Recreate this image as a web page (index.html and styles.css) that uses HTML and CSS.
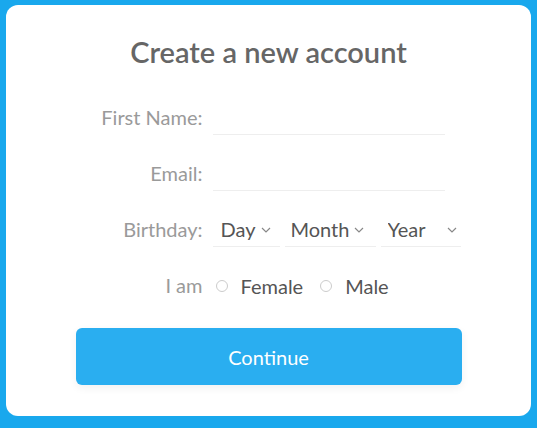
FILE: index.html
```html
<!DOCTYPE html>
<html lang="en">

<head>
    <meta charset="UTF-8">
    <meta name="viewport" content="width=device-width, initial-scale=1">
    <title>Create a new account</title>
    <link rel="stylesheet" href="styles.css">
</head>

<body>

    <div class="card">
        <h1>Create a new account</h1>

        <form class="signup">
            <label class="label" for="firstName">First Name:</label>
            <input class="field" type="text" id="firstName">

            <label class="label" for="email">Email:</label>
            <input class="field" type="email" id="email">

            <span class="label">Birthday:</span>
            <div class="birthday">
                <select class="pick pick-day">
                    <option>Day</option>
                </select>
                <select class="pick pick-month">
                    <option>Month</option>
                </select>
                <select class="pick pick-year">
                    <option>Year</option>
                </select>
            </div>

            <span class="label">I am</span>
            <div class="gender">
                <label class="radio"><input type="radio" name="gender"><span>Female</span></label>
                <label class="radio"><input type="radio" name="gender"><span>Male</span></label>
            </div>

            <button type="button" class="continue">Continue</button>
        </form>
    </div>

</body>

</html>
```

FILE: styles.css
```css
body {
    margin: 0;
    padding: 5px 6px 12px;
    background: #19a8ed;
    font-family: 'Lato', sans-serif;
}

.card {
    background: white;
    border-radius: 12px;
    height: 411px;
    box-sizing: border-box;
    padding-top: 28px;
}

h1 {
    margin: 0;
    text-align: center;
    font-size: 29px;
    font-weight: 600;
    color: #666;
    line-height: 38px;
}

.signup {
    width: 386px;
    margin: 29px auto 0;
    display: grid;
    grid-template-columns: 127px 1fr;
    column-gap: 10px;
    row-gap: 21px;
    align-items: center;
}

.label {
    text-align: right;
    font-size: 20px;
    color: #9a9a9a;
    line-height: 35px;
}

.field {
    width: 232px;
    height: 35px;
    box-sizing: border-box;
    border: none;
    border-bottom: 1px solid #eee;
    outline: none;
    font-family: inherit;
    font-size: 20px;
}

.birthday {
    display: flex;
    gap: 5px;
}

.pick {
    appearance: none;
    -webkit-appearance: none;
    border: none;
    border-bottom: 1px solid #eee;
    border-radius: 0;
    background: white url("data:image/svg+xml,%3Csvg xmlns='http://www.w3.org/2000/svg' width='10' height='6' viewBox='0 0 10 6'%3E%3Cpath d='M1 1l4 4 4-4' fill='none' stroke='%23888' stroke-width='1.2'/%3E%3C/svg%3E") no-repeat;
    height: 35px;
    padding: 0 0 0 8px;
    font-family: 'Lato', sans-serif;
    font-size: 20px;
    color: #555;
}

.pick-day {
    width: 67px;
    background-position: 48px 15px;
}

.pick-month {
    width: 91px;
    padding-left: 6px;
    background-position: 69px 15px;
}

.pick-year {
    width: 80px;
    padding-left: 7px;
    background-position: 66px 15px;
}

.gender {
    display: flex;
    align-items: center;
    height: 35px;
}

.radio {
    display: flex;
    align-items: center;
    margin-right: 14px;
    font-size: 20px;
    color: #555;
}

.radio input {
    appearance: none;
    -webkit-appearance: none;
    width: 12px;
    height: 12px;
    margin: 0 13px 0 3px;
    border: 1px solid #ccc;
    border-radius: 50%;
}

.continue {
    grid-column: 1 / -1;
    margin-top: 4px;
    height: 57px;
    border: none;
    border-radius: 6px;
    background: #2aaef0;
    color: white;
    font-family: 'Lato', sans-serif;
    font-size: 20px;
    cursor: pointer;
    box-shadow: 0 3px 8px rgba(0, 0, 0, 0.06);
}
```
